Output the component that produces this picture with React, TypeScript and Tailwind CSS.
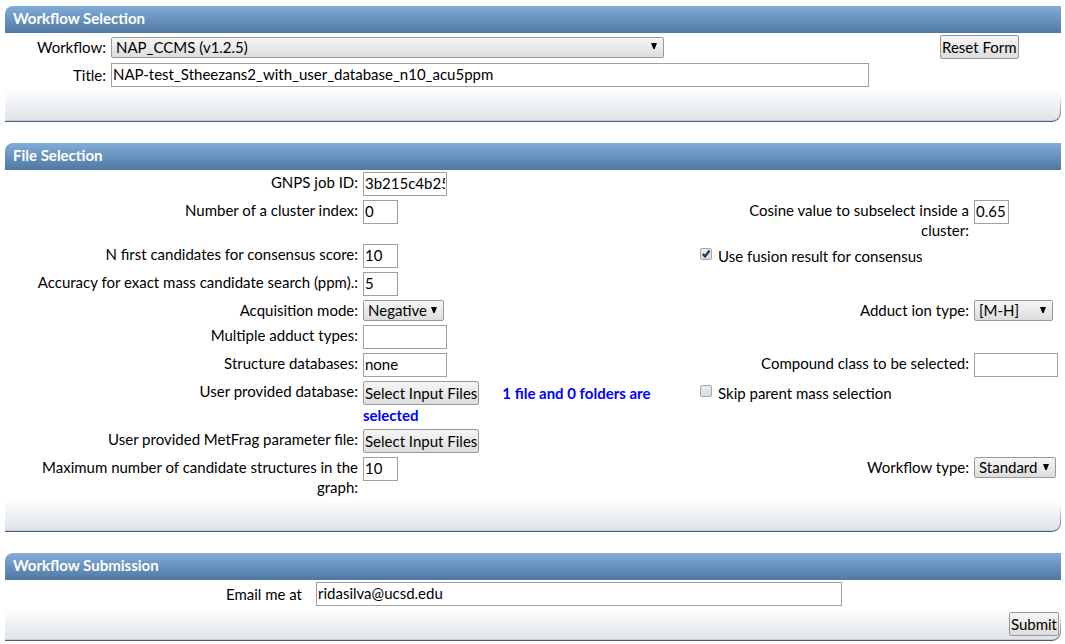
import React from 'react';

const inputBase = 'h-6 border border-[#a0a0a0] bg-white px-px pb-[2px] text-black outline-none';

export default function App() {
  return (
    <form
      className="flex flex-col gap-[21px] bg-white pt-[6px] pr-1 pb-[3px] pl-[5px] font-['Lato',sans-serif] text-[15px] leading-5 text-black"
      onSubmit={(e) => e.preventDefault()}
    >
      <Panel title="Workflow Selection">
        <div className="grid grid-cols-[106fr_758fr_192fr] items-center">
          <label htmlFor="workflow" className="pr-[5px] pb-px text-right">Workflow:</label>
          <Select id="workflow" className="w-[73%]" options={['NAP_CCMS (v1.2.5)']} />
          <div className="py-[2px] pl-[71px]">
            <Button type="reset">Reset Form</Button>
          </div>
          <label htmlFor="title" className="pr-[5px] pb-px text-right">Title:</label>
          <div className="flex py-[2px]">
            <input id="title" type="text" className={`w-full ${inputBase}`} defaultValue="NAP-test_Stheezans2_with_user_database_n10_acu5ppm" />
          </div>
        </div>
      </Panel>

      <Panel title="File Selection">
        <div>
          <Row>
            <TextField id="job" label="GNPS job ID:" value="3b215c4b255e4f0d" />
          </Row>
          <Row>
            <TextField id="cluster" label="Number of a cluster index:" value="0" small />
            <TextField id="cosine" label="Cosine value to subselect inside a cluster:" value="0.65" small />
          </Row>
          <Row>
            <TextField id="first" label="N first candidates for consensus score:" value="10" small />
            <CheckField id="fusion" label="Use fusion result for consensus" checked />
          </Row>
          <Row>
            <TextField id="accuracy" label="Accuracy for exact mass candidate search (ppm).:" value="5" small />
          </Row>
          <Row>
            <Label id="mode">Acquisition mode:</Label>
            <Select id="mode" className="w-[81px]" options={['Negative', 'Positive']} />
            <Label id="adduct">Adduct ion type:</Label>
            <Select id="adduct" className="w-[79px]" options={['[M-H]', '[M+H]']} />
          </Row>
          <Row>
            <TextField id="multiple" label="Multiple adduct types:" value="" />
          </Row>
          <Row>
            <TextField id="databases" label="Structure databases:" value="none" />
            <TextField id="compound" label="Compound class to be selected:" value="" />
          </Row>
          <Row>
            <Label id="userdb">User provided database:</Label>
            <div>
              <Button id="userdb">Select Input Files</Button>
              <span className="ml-[23px] font-bold text-[#0000ff]">1 file and 0 folders are selected</span>
            </div>
            <CheckField id="skip" label="Skip parent mass selection" />
          </Row>
          <Row>
            <Label id="metfrag">User provided MetFrag parameter file:</Label>
            <div className="flex">
              <Button id="metfrag">Select Input Files</Button>
            </div>
          </Row>
          <Row>
            <TextField id="maximum" label="Maximum number of candidate structures in the graph:" value="10" small />
            <Label id="type">Workflow type:</Label>
            <Select id="type" className="w-[82px]" options={['Standard', 'Advanced']} />
          </Row>
        </div>
      </Panel>

      <Panel title="Workflow Submission" footer={<Button type="submit">Submit</Button>}>
        <div className="grid grid-cols-[311fr_526fr_219fr] items-center py-[2px]">
          <label htmlFor="email" className="pr-[14px] pb-px text-right">Email me at</label>
          <input id="email" type="text" className={`w-full ${inputBase}`} defaultValue="ridasilva@ucsd.edu" />
        </div>
      </Panel>
    </form>
  );
}

function Panel({ title, footer, children }: { title: string; footer?: React.ReactNode; children: React.ReactNode }) {
  return (
    <section>
      <h2 className="h-[27px] rounded-tl-lg bg-linear-to-b from-[#82acd9] to-[#5078a3] px-2 pt-[2px] font-bold text-white">{title}</h2>
      {children}
      {/* outer gradient shows through as the fading right edge and the bottom line */}
      <div className="h-[33px] rounded-br-[9px] bg-linear-to-b from-white from-20% to-[#465b75] pr-px pb-px">
        <div className="flex h-full justify-end rounded-br-lg border-b border-[#c5cdd6] bg-linear-to-b from-white to-[#dfe4ea] pt-1 pr-px">{footer}</div>
      </div>
    </section>
  );
}

function Row({ children }: { children: React.ReactNode }) {
  return <div className="grid grid-cols-[358fr_337fr_274fr_87fr] items-start py-[2px]">{children}</div>;
}

function Label({ id, children }: { id: string; children: React.ReactNode }) {
  return <label htmlFor={id} className="pr-[5px] text-right">{children}</label>;
}

function TextField({ id, label, value, small }: { id: string; label: string; value: string; small?: boolean }) {
  return (
    <>
      <Label id={id}>{label}</Label>
      <input id={id} type="text" className={`${small ? 'w-[35px]' : 'w-[84px]'} ${inputBase}`} defaultValue={value} />
    </>
  );
}

function CheckField({ id, label, checked }: { id: string; label: string; checked?: boolean }) {
  return (
    <div className="col-span-2 flex items-start leading-6">
      <span className="mt-1 mr-[6px] grid">
        <input
          id={id}
          type="checkbox"
          defaultChecked={checked}
          className="peer col-start-1 row-start-1 size-3 appearance-none rounded-[2px] border border-[#a6a6a6] bg-linear-to-b from-[#ededed] to-[#dcdcdc]"
        />
        <svg viewBox="0 0 12 12" className="pointer-events-none invisible col-start-1 row-start-1 size-3 peer-checked:visible">
          <path d="M2.8 6 L5 8.4 L9.5 2.6" fill="none" stroke="#3c3c3c" strokeWidth="2.4" />
        </svg>
      </span>
      <label htmlFor={id}>{label}</label>
    </div>
  );
}

function Select({ id, className, options }: { id: string; className: string; options: string[] }) {
  return (
    <div className={`grid items-center ${className}`}>
      <select
        id={id}
        className="col-start-1 row-start-1 h-[21px] w-full appearance-none rounded-[2px] border border-[#999] bg-linear-to-b from-[#f6f6f6] to-[#dddddd] px-1 leading-[19px] text-black outline-none"
      >
        {options.map((o) => (
          <option key={o}>{o}</option>
        ))}
      </select>
      <svg viewBox="0 0 6 6" className="pointer-events-none col-start-1 row-start-1 mr-[7px] mb-[2px] size-[6px] justify-self-end">
        <path d="M0 0 H6 L3.6 6 H2.4 Z" fill="#000" />
      </svg>
    </div>
  );
}

function Button({ id, type = 'button', children }: { id?: string; type?: 'button' | 'submit' | 'reset'; children: React.ReactNode }) {
  return (
    <button
      id={id}
      type={type}
      className="h-6 rounded-[2px] border border-[#999] bg-linear-to-b from-[#f6f6f6] to-[#dddddd] px-px pb-px leading-5 whitespace-nowrap text-black"
    >
      {children}
    </button>
  );
}
